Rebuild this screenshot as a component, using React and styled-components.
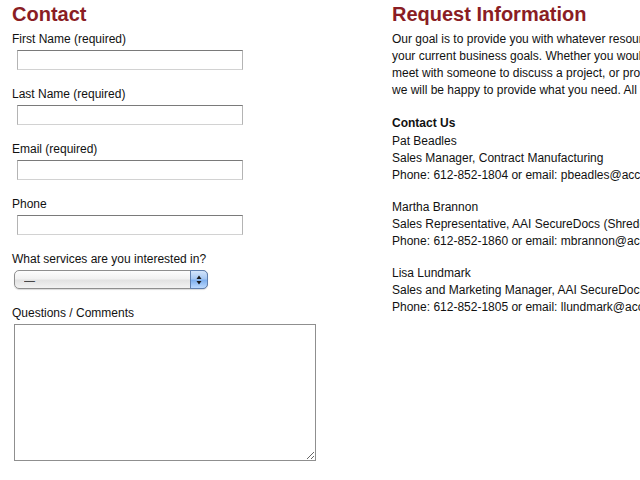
import React from "react";
import styled, { createGlobalStyle } from "styled-components";

const Global = createGlobalStyle`
  html, body {
    margin: 0;
    padding: 0;
    background: #fff;
    overflow: hidden;
  }
  body {
    font-family: "Liberation Sans", Arial, Helvetica, sans-serif;
    font-size: 12px;
    color: #111;
  }
`;

const Page = styled.div`
  display: flex;
  width: 1000px;
  padding: 0 0 0 12px;
`;

const Column = styled.div`
  width: ${(p) => p.width}px;
  flex-shrink: 0;
`;

const Heading = styled.h2`
  margin: 0;
  padding-top: 2px;
  font-size: 20px;
  line-height: 24px;
  font-weight: 700;
  color: #8a1d24;
  height: 29px;
`;

const Field = styled.div`
  display: flex;
  flex-direction: column;
  align-items: flex-start;
  margin-bottom: 16px;
`;

const Label = styled.label`
  display: block;
  line-height: 17px;
  margin-bottom: 2px;
`;

const TextInput = styled.input`
  box-sizing: border-box;
  width: 226px;
  height: 20px;
  margin: 0 0 0 5px;
  padding: 2px 3px;
  border: 1px solid #b4b4b4;
  border-top-color: #7a7a7a;
  border-bottom-color: #d2d2d2;
  background: #fff;
  font: inherit;
  outline: none;
`;

const SelectWrap = styled.div`
  position: relative;
  margin-left: 2px;
  width: 194px;
  height: 19px;
`;

const Select = styled.select`
  box-sizing: border-box;
  width: 100%;
  height: 100%;
  appearance: none;
  -webkit-appearance: none;
  border: 1px solid #8e8e8e;
  border-radius: 5px;
  padding: 0 24px 0 9px;
  font: 11px "Liberation Sans", Arial, sans-serif;
  color: #222;
  background: linear-gradient(#fdfdfd 0%, #f1f1f1 45%, #e2e2e2 55%, #f2f2f2 100%);
  box-shadow: 0 1px 1px rgba(0, 0, 0, 0.15);
  outline: none;
`;

const Arrows = styled.span`
  position: absolute;
  top: 0;
  right: 0;
  width: 18px;
  height: 19px;
  box-sizing: border-box;
  border: 1px solid #5f7fae;
  border-radius: 0 5px 5px 0;
  background: linear-gradient(#d4e5fb 0%, #a7c8f3 45%, #7fb0ee 55%, #bcdaff 100%);
  display: flex;
  align-items: center;
  justify-content: center;
  pointer-events: none;
`;

const CommentBox = styled.textarea`
  box-sizing: border-box;
  width: 302px;
  height: 137px;
  margin-left: 2px;
  border: 1px solid #8f8f8f;
  font: inherit;
  outline: none;
  resize: both;
`;

const Text = styled.p`
  margin: 0 0 ${(p) => p.gap ?? 15}px;
  line-height: 17px;
  white-space: nowrap;
`;

const SubHeading = styled.h4`
  margin: 0 0 1px;
  font-size: 12px;
  line-height: 17px;
  font-weight: 700;
`;

const contacts = [
  {
    name: "Pat Beadles",
    title: "Sales Manager, Contract Manufacturing",
    phone: "612-852-1804",
    email: "pbeadles@accurateassembly.com",
  },
  {
    name: "Martha Brannon",
    title: "Sales Representative, AAI SecureDocs (Shredding Services)",
    phone: "612-852-1860",
    email: "mbrannon@accurateassembly.com",
  },
  {
    name: "Lisa Lundmark",
    title: "Sales and Marketing Manager, AAI SecureDocs",
    phone: "612-852-1805",
    email: "llundmark@accurateassembly.com",
  },
];

const fields = [
  "First Name (required)",
  "Last Name (required)",
  "Email (required)",
  "Phone",
];

export default function App() {
  return (
    <>
      <Global />
      <Page>
        <Column width={380}>
          <Heading>Contact</Heading>
          {fields.map((f) => (
            <Field key={f}>
              <Label>{f}</Label>
              <TextInput type="text" />
            </Field>
          ))}
          <Field>
            <Label>What services are you interested in?</Label>
            <SelectWrap>
              <Select defaultValue="">
                <option value="">—</option>
                <option>Contract Manufacturing</option>
                <option>AAI SecureDocs</option>
              </Select>
              <Arrows>
                <svg width="6" height="10" viewBox="0 0 6 10">
                  <path d="M3 0.5 L5.5 4 L0.5 4 Z" fill="#1a1a1a" />
                  <path d="M3 9.5 L5.5 6 L0.5 6 Z" fill="#1a1a1a" />
                </svg>
              </Arrows>
            </SelectWrap>
          </Field>
          <Field>
            <Label>Questions / Comments</Label>
            <CommentBox />
          </Field>
        </Column>
        <Column width={560}>
          <Heading>Request Information</Heading>
          <Text gap={16}>
            Our goal is to provide you with whatever resources you need to help you meet
            <br />
            your current business goals. Whether you would like more information, want to
            <br />
            meet with someone to discuss a project, or product a quote on your next project,
            <br />
            we will be happy to provide what you need. All you have to do is ask.
          </Text>
          <SubHeading>Contact Us</SubHeading>
          {contacts.map((c) => (
            <Text key={c.name}>
              {c.name}
              <br />
              {c.title}
              <br />
              Phone: {c.phone} or email: {c.email}
            </Text>
          ))}
        </Column>
      </Page>
    </>
  );
}
